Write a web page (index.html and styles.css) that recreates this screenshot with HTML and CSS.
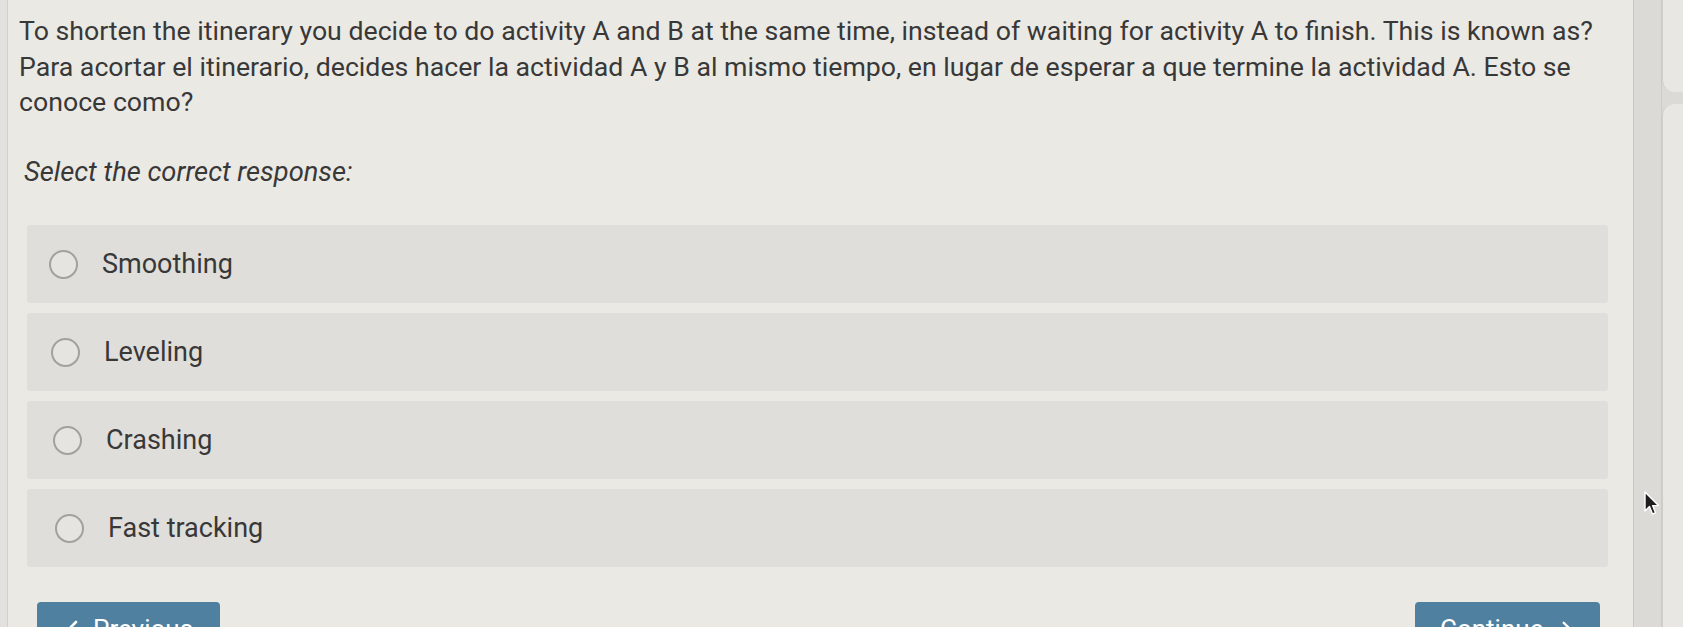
FILE: index.html
```html
<!DOCTYPE html>
<html>
<head>
    <title>Question</title>
    <link rel="stylesheet" href="styles.css">
</head>
<body>
    <div class="page">
        <div class="main">
            <p class="question">To shorten the itinerary you decide to do activity A and B at the same time, instead of waiting for activity A to finish. This is known as?<br>Para acortar el itinerario, decides hacer la actividad A y B al mismo tiempo, en lugar de esperar a que termine la actividad A. Esto se conoce como?</p>

            <p class="prompt">Select the correct response:</p>

            <div class="options">
                <label class="option"><span class="radio"></span>Smoothing</label>
                <label class="option"><span class="radio"></span>Leveling</label>
                <label class="option"><span class="radio"></span>Crashing</label>
                <label class="option"><span class="radio"></span>Fast tracking</label>
            </div>

            <div class="nav">
                <button class="btn btn-prev">
                    <svg width="14" height="18" viewBox="0 0 14 18"><path d="M11 2 L4 9 L11 16" fill="none" stroke="#fff" stroke-width="2.6" stroke-linecap="round" stroke-linejoin="round"/></svg>
                    Previous
                </button>
                <button class="btn btn-next">
                    Continue
                    <svg width="14" height="18" viewBox="0 0 14 18"><path d="M3 2 L10 9 L3 16" fill="none" stroke="#fff" stroke-width="2.6" stroke-linecap="round" stroke-linejoin="round"/></svg>
                </button>
            </div>
        </div>

        <div class="strip"></div>

        <div class="side">
            <div class="panel panel-top"></div>
            <div class="panel panel-bottom"></div>
        </div>

        <svg class="cursor" width="18" height="26" viewBox="0 0 18 26">
            <path d="M2 1 L2 20 L6.5 15.5 L9.5 23 L12.5 21.8 L9.6 14.6 L15.5 14.6 Z" fill="#1e1e1e" stroke="#fff" stroke-width="1.4" stroke-linejoin="round"/>
        </svg>
    </div>
</body>
</html>
```

FILE: styles.css
```css
body {
    margin: 0;
    background-color: #e3e1dd;
    font-family: Roboto, "Noto Sans", Arial, sans-serif;
    color: #383838;
    overflow: hidden;
}

.page {
    position: relative;
    display: flex;
    height: 627px;
    padding-left: 7px;
}

.main {
    width: 1626px;
    padding-left: 11px;
    background-color: #ebe9e4;
    border-left: 1px solid #d2d0cb;
    box-sizing: border-box;
}

.question {
    margin: 0;
    padding-top: 14px;
    width: 1596px;
    font-size: 26.7px;
    line-height: 35.5px;
}

.prompt {
    margin: 34px 0 0 5px;
    font-size: 27.3px;
    line-height: 35.5px;
    font-style: italic;
}

.options {
    margin: 35px 0 0 8px;
    width: 1581px;
}

.option {
    display: flex;
    align-items: center;
    height: 78px;
    margin-bottom: 10px;
    padding-left: 22px;
    background-color: #e0deda;
    border-radius: 3px;
    font-size: 27px;
}

.option:nth-child(2) { padding-left: 24px; }
.option:nth-child(3) { padding-left: 26px; }
.option:nth-child(4) { padding-left: 28px; }

.radio {
    width: 25px;
    height: 25px;
    margin-right: 24px;
    border: 2px solid #a3a19d;
    border-radius: 50%;
    background-color: #e6e4e0;
}

.nav {
    display: flex;
    justify-content: space-between;
    margin: 35px 0 0 18px;
    width: 1563px;
}

.btn {
    display: flex;
    align-items: center;
    gap: 14px;
    height: 54px;
    padding: 0 26px;
    background-color: #4f809f;
    color: white;
    border: none;
    border-radius: 4px;
    font-family: Roboto, Arial, sans-serif;
    font-size: 26px;
    cursor: pointer;
}

.btn-prev {
    width: 183px;
    padding-left: 28px;
}

.btn-next {
    width: 185px;
    gap: 18px;
    padding-left: 25px;
}

.strip {
    width: 27px;
    background-color: #dcdad6;
    border-left: 1px solid #c9c7c3;
    border-right: 1px solid #cecbc7;
}

.side {
    flex: 1;
    display: flex;
    flex-direction: column;
    gap: 12px;
    background-color: #dcdad6;
}

.panel {
    background-color: #e9e7e3;
    border-left: 1px solid #d0cec9;
}

.panel-top {
    height: 92px;
    border-bottom-left-radius: 12px;
}

.panel-bottom {
    flex: 1;
    border-top-left-radius: 12px;
}

.cursor {
    position: absolute;
    left: 1643px;
    top: 491px;
}
```
